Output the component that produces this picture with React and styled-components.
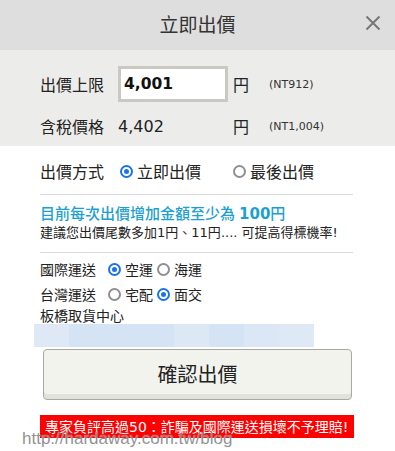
import React from 'react'
import styled, { createGlobalStyle } from 'styled-components'

const GlobalStyle = createGlobalStyle`
  html, body {
    margin: 0;
    padding: 0;
    background: #fff;
  }
  body {
    width: 395px;
    height: 451px;
    overflow: hidden;
    font-family: "DejaVu Sans", "Noto Sans CJK TC", sans-serif;
    color: #222;
  }
`

const cjk = `"Noto Sans CJK TC", "DejaVu Sans", sans-serif`

const Dialog = styled.div`
  position: relative;
  width: 395px;
  height: 451px;
  display: flex;
  flex-direction: column;
`

const Header = styled.div`
  height: 50px;
  background: #dedede;
  display: grid;
  grid-template-columns: 1fr auto 1fr;
  align-items: center;
`

const Title = styled.div`
  grid-column: 2;
  font-family: ${cjk};
  font-size: 19px;
  color: #333;
  margin-top: -4px;
`

const Close = styled.div`
  grid-column: 3;
  justify-self: end;
  margin-right: 14px;
  margin-top: -4px;
  width: 16px;
  height: 16px;
  display: flex;
`

const PriceBox = styled.div`
  background: #ececea;
  padding: 16px 0 10px 40px;
  display: flex;
  flex-direction: column;
  gap: 12px;
`

const PriceRow = styled.div`
  display: grid;
  grid-template-columns: 78px 115px 36px auto;
  align-items: center;
  height: ${p => p.$h}px;
`

const Label = styled.span`
  font-family: ${cjk};
  font-size: 16px;
  color: #222;
`

const Input = styled.div`
  box-sizing: border-box;
  width: 110px;
  height: 36px;
  background: #fff;
  border: 3px solid #c9c9c1;
  padding-left: 3px;
  display: flex;
  align-items: center;
  font-size: 15.5px;
  font-weight: bold;
  color: #111;
`

const Value = styled.span`
  font-size: 16px;
  color: #222;
`

const Note = styled.span`
  font-size: 11px;
  color: #333;
`

const Body = styled.div`
  display: flex;
  flex-direction: column;
  padding-top: 11px;
`

const MethodRow = styled.div`
  height: 28px;
  padding-left: 40px;
  display: flex;
  align-items: center;
  font-family: ${cjk};
  font-size: 16px;
`

const Option = styled.label`
  display: flex;
  align-items: center;
  gap: ${p => p.$gap || 4}px;
  margin-left: ${p => p.$ml}px;
  font-family: ${cjk};
  font-size: ${p => p.$size}px;
  color: #222;
`

const Radio = styled.span`
  box-sizing: border-box;
  width: 13px;
  height: 13px;
  border-radius: 50%;
  border: 2px solid ${p => (p.$on ? '#1a73e8' : '#8e8e93')};
  display: flex;
  align-items: center;
  justify-content: center;
  &::after {
    content: '';
    width: 5px;
    height: 5px;
    border-radius: 50%;
    background: ${p => (p.$on ? '#1a73e8' : 'transparent')};
  }
`

const Divider = styled.div`
  margin: ${p => p.$mt}px 42px 0 40px;
  height: 1px;
  background: #dcdcdc;
`

const Info = styled.div`
  margin-top: 9px;
  padding-left: 40px;
  font-family: ${cjk};
  line-height: 18px;
`

const Blue = styled.div`
  color: #1ca0d2;
  font-size: 15px;
  font-weight: 500;
  b {
    font-family: "DejaVu Sans", sans-serif;
    font-weight: bold;
    margin-left: 4px;
  }
`

const Hint = styled.div`
  font-size: 13px;
  color: #222;
  span {
    font-family: "DejaVu Sans", sans-serif;
  }
`

const ShipRow = styled.div`
  height: 24px;
  margin-top: ${p => p.$mt}px;
  padding-left: 40px;
  display: flex;
  align-items: center;
  font-family: ${cjk};
  font-size: 14px;
`

const Pickup = styled.div`
  padding-left: 40px;
  font-family: ${cjk};
  font-size: 14px;
  line-height: 18px;
`

const Blocks = styled.div`
  display: flex;
  margin-left: 34px;
  height: 23px;
`

const Block = styled.div`
  width: ${p => p.$w}px;
  background: ${p => p.$c};
`

const Confirm = styled.button`
  box-sizing: border-box;
  margin: 2px 0 0 43px;
  width: 309px;
  height: 51px;
  border: 1px solid #a8a8a4;
  border-radius: 4px;
  background: #f3f3ee;
  box-shadow: inset 0 -5px 0 #e2e2dc;
  font-family: ${cjk};
  font-size: 20px;
  color: #222;
  padding-bottom: 3px;
`

const Warning = styled.div`
  margin: 15px 0 0 40px;
  width: 314px;
  height: 23px;
  background: #fe0000;
  color: #fff;
  font-family: ${cjk};
  font-size: 14px;
  line-height: 23px;
  padding-left: 5px;
  box-sizing: border-box;
  white-space: nowrap;
  span {
    font-family: "DejaVu Sans", sans-serif;
  }
`

const Watermark = styled.div`
  position: absolute;
  left: 22px;
  bottom: 2px;
  font-family: "Liberation Sans", sans-serif;
  font-size: 17px;
  color: rgba(125, 125, 125, 0.85);
  text-shadow: 0 0 1px rgba(255, 255, 255, 0.8);
  pointer-events: none;
`

const blocks = [
  [35, '#dfe9f5'],
  [105, '#d5e4f4'],
  [35, '#dde8f5'],
  [35, '#d5e4f4'],
  [35, '#dbe7f5'],
  [35, '#dfe9f5'],
]

const App = () => {
  return (
    <Dialog>
      <GlobalStyle />
      <Header>
        <Title>立即出價</Title>
        <Close>
          <svg width="16" height="16" viewBox="0 0 16 16">
            <path d="M1.5 1.5 L14.5 14.5 M14.5 1.5 L1.5 14.5" stroke="#777" strokeWidth="2" />
          </svg>
        </Close>
      </Header>

      <PriceBox>
        <PriceRow $h={36}>
          <Label>出價上限</Label>
          <Input>4,001</Input>
          <Label>円</Label>
          <Note>(NT912)</Note>
        </PriceRow>
        <PriceRow $h={22}>
          <Label>含稅價格</Label>
          <Value>4,402</Value>
          <Label>円</Label>
          <Note>(NT1,004)</Note>
        </PriceRow>
      </PriceBox>

      <Body>
        <MethodRow>
          出價方式
          <Option $ml={16} $size={16}>
            <Radio $on />
            立即出價
          </Option>
          <Option $ml={32} $size={16}>
            <Radio />
            最後出價
          </Option>
        </MethodRow>

        <Divider $mt={9} />

        <Info>
          <Blue>
            目前每次出價增加金額至少為<b>100</b>円
          </Blue>
          <Hint>
            建議您出價尾數多加<span>1</span>円、<span>11</span>円<span>.... </span>可提高得標機率<span>!</span>
          </Hint>
        </Info>

        <Divider $mt={10} />

        <ShipRow $mt={4}>
          國際運送
          <Option $ml={12} $size={14}>
            <Radio $on />
            空運
          </Option>
          <Option $ml={4} $size={14}>
            <Radio />
            海運
          </Option>
        </ShipRow>
        <ShipRow $mt={1}>
          台灣運送
          <Option $ml={12} $size={14}>
            <Radio />
            宅配
          </Option>
          <Option $ml={4} $size={14}>
            <Radio $on />
            面交
          </Option>
        </ShipRow>
        <Pickup>板橋取貨中心</Pickup>

        <Blocks>
          {blocks.map(([w, c], i) => (
            <Block key={i} $w={w} $c={c} />
          ))}
        </Blocks>

        <Confirm>確認出價</Confirm>

        <Warning>
          專家負評高過<span>50</span>：詐騙及國際運送損壞不予理賠<span>!</span>
        </Warning>
      </Body>

      <Watermark>http://hardaway.com.tw/blog</Watermark>
    </Dialog>
  )
}

export default App
